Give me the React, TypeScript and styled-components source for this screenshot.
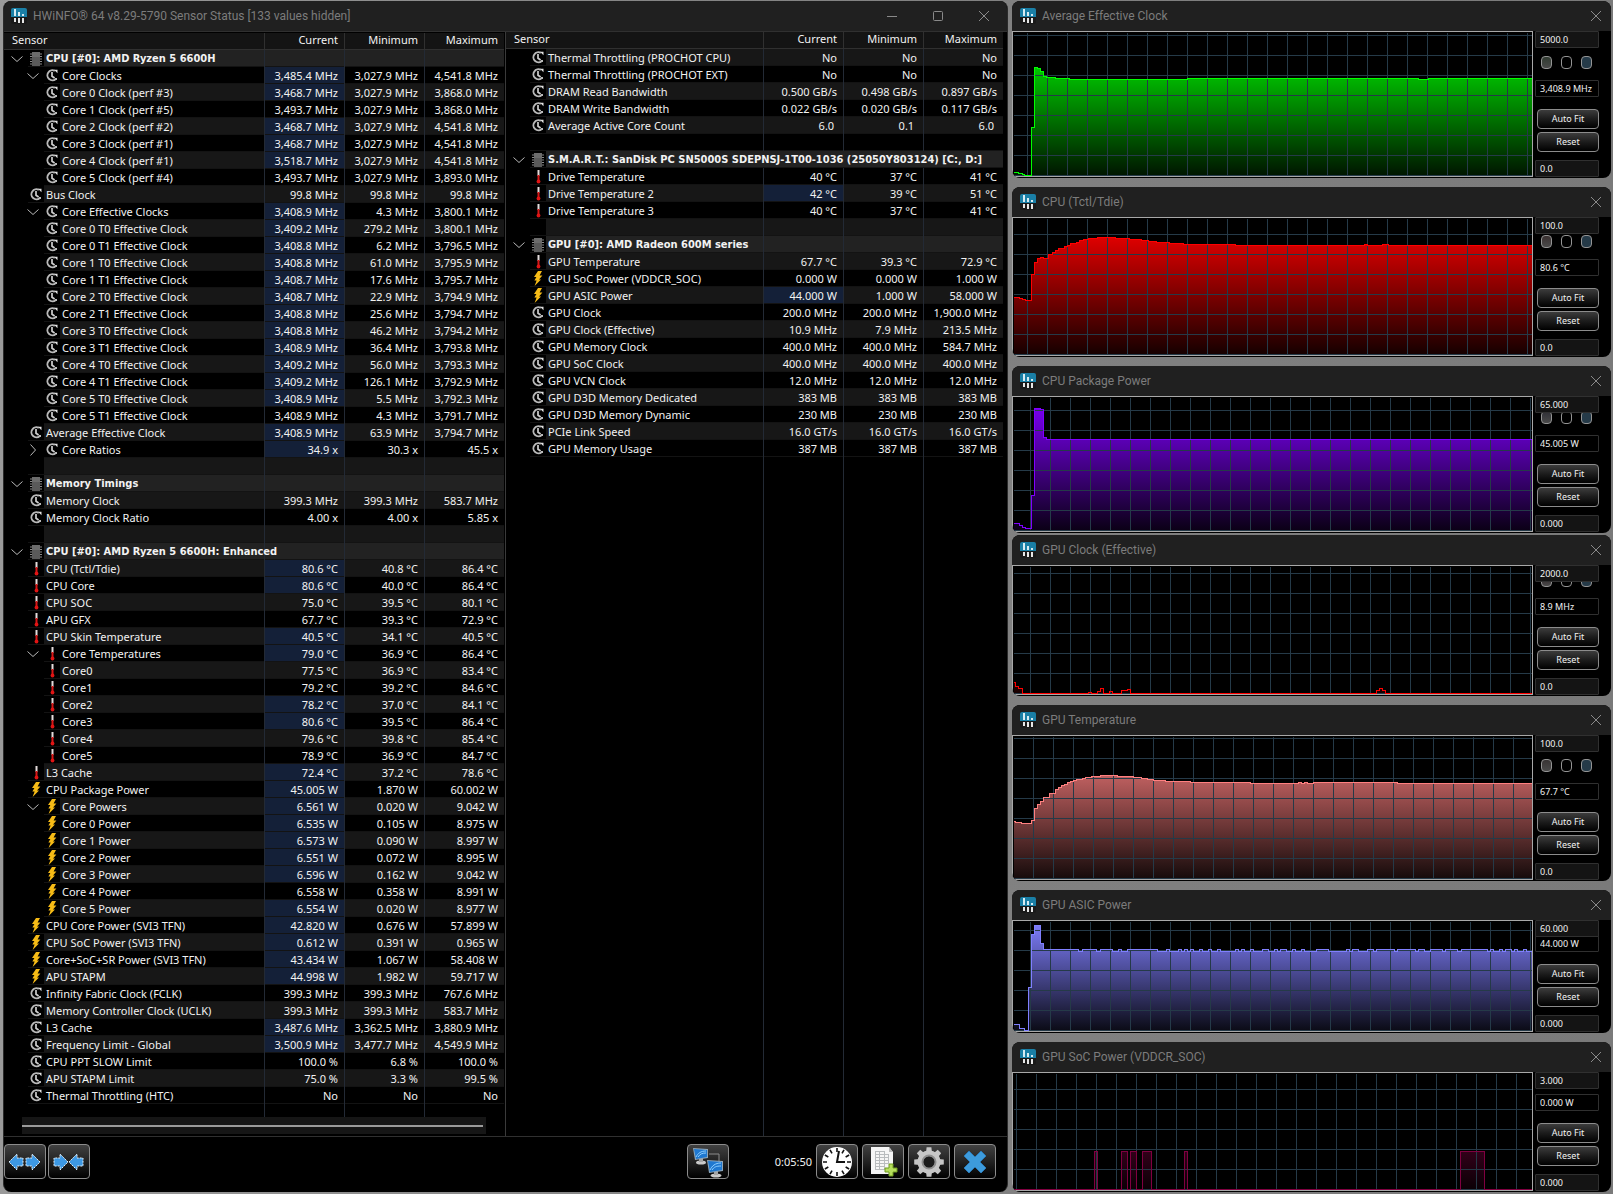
import React from "react";
import styled, { createGlobalStyle } from "styled-components";

const GlobalStyle = createGlobalStyle`
  *, *::before, *::after { box-sizing: border-box; }
  body {
    margin: 0;
    background: #7e7e7e;
    color: #f2f2f2;
    font-family: "Noto Sans", "Open Sans", sans-serif;
    font-size: 11px;
    line-height: 17px;
  }
  button, input { font-family: inherit; color: inherit; }
`;

/* ---------- layout ---------- */

const Desktop = styled.main`
  display: grid;
  grid-template-columns: minmax(0, 1005fr) minmax(0, 599fr);
  gap: 4px;
  min-height: 100vh;
  padding: 1px 2px 2px 3px;
  background: linear-gradient(90deg, #9a9a9a 0, #858585 40%, #7a7a7a 100%);
`;

const Window = styled.section`
  display: flex;
  flex-direction: column;
  min-width: 0;
  overflow: hidden;
  background: #000;
  border-radius: 8px;
`;

const SensorWindow = styled(Window)`
  border: solid #2b2b2b;
  border-width: 0 1px;
`;

const TitleBar = styled.header<{ $inset: number }>`
  display: flex;
  align-items: center;
  gap: 6px;
  flex: none;
  height: 30px;
  padding-left: ${(p) => p.$inset}px;
  background: #202020;
`;

const Title = styled.h1`
  flex: 1;
  min-width: 0;
  margin: 0;
  overflow: hidden;
  color: #7c7c7c;
  font-family: Roboto, "Noto Sans", sans-serif;
  font-size: 12px;
  font-weight: 400;
  line-height: 16px;
  white-space: nowrap;
`;

const CaptionButtons = styled.div`
  display: flex;
`;

const CaptionButton = styled.button<{ $width: number }>`
  display: grid;
  place-items: center;
  width: ${(p) => p.$width}px;
  height: 30px;
  padding: 0;
  border: 0;
  background: none;
  color: #8a8a8a;
`;

const Graphs = styled.div`
  display: flex;
  flex-direction: column;
  min-width: 0;
`;

/* ---------- sensor tables ---------- */

const Panes = styled.div`
  display: grid;
  grid-template-columns: minmax(0, 502fr) minmax(0, 501fr);
  flex: 1;
  border: solid #303030;
  border-width: 1px 0;
`;

const Pane = styled.div`
  display: flex;
  flex-direction: column;
  padding-right: 4px;
`;

const FramedPane = styled(Pane)`
  padding: 1px 1px 2px 0;
  border-right: 1px solid #3a3a3a;
`;

const Table = styled.table`
  flex: 1;
  width: 100%;
  table-layout: fixed;
  border-collapse: separate;
  border-spacing: 0;
  white-space: pre;
`;

const HeadCell = styled.th<{ $name?: boolean }>`
  width: ${(p) => (p.$name ? "auto" : "80px")};
  height: 17px;
  padding: ${(p) => (p.$name ? "0 0 0 8px" : "0 6px 0 0")};
  background: #141414;
  border-bottom: 1px solid #303030;
  border-left: ${(p) => (p.$name ? "0" : "1px solid #303030")};
  font-weight: 400;
  line-height: 14px;
  text-align: ${(p) => (p.$name ? "left" : "right")};
  vertical-align: top;
`;

type Tone = "section" | "even" | "odd";
const toneColor: Record<Tone, string> = { section: "#222222", even: "#171717", odd: "#000000" };

const NameCell = styled.td`
  height: 17px;
  padding: 0;
`;

const NameLine = styled.div`
  display: flex;
  height: 17px;
`;

const Tree = styled.span<{ $level: number }>`
  display: flex;
  flex: none;
  align-items: center;
  justify-content: flex-end;
  width: ${(p) => 8 + p.$level * 16}px;
  padding-right: 5px;
`;

const IconBox = styled.span`
  display: grid;
  place-items: center;
  flex: none;
  width: 16px;
  box-shadow: inset 0 -1px #131313;
`;

const Name = styled.span<{ $tone: Tone }>`
  flex: 1;
  min-width: 0;
  padding-left: 2px;
  background: ${(p) => toneColor[p.$tone]};
  box-shadow: inset 0 -1px #131313;
  font-family: ${(p) => (p.$tone === "section" ? '"DejaVu Sans Condensed", "Noto Sans", sans-serif' : "inherit")};
  font-weight: ${(p) => (p.$tone === "section" ? 700 : 400)};
`;

const ValueCell = styled.td<{ $tone: Tone; $hot?: boolean }>`
  height: 17px;
  padding: 0 6px 0 0;
  background: ${(p) => (p.$hot ? "#142038" : toneColor[p.$tone])};
  border-left: 1px solid #232a35;
  box-shadow: inset 0 -1px #131313;
  text-align: right;
`;

const FillerCell = styled.td<{ $ruled?: boolean }>`
  padding: 0;
  border-left: ${(p) => (p.$ruled ? "1px solid #232a35" : "0")};
`;

const ScrollTrack = styled.div`
  display: flex;
  align-items: center;
  flex: none;
  height: 17px;
  margin: 0 18px;
  padding-right: 3px;
  background: #161616;
`;

const ScrollThumb = styled.div`
  flex: 1;
  height: 2px;
  background: #9a9a9a;
`;

/* ---------- toolbar ---------- */

const Toolbar = styled.footer`
  display: flex;
  align-items: flex-start;
  gap: 4px;
  flex: none;
  height: 55px;
  padding: 7px 11px 0 0;
`;

const ToolGroup = styled.div`
  display: flex;
  flex: 1;
  gap: 2px;
`;

const ToolButton = styled.button`
  display: grid;
  place-items: center;
  width: 42px;
  height: 35px;
  padding: 0;
  border: 1px solid #8c8c8c;
  border-radius: 4px;
  background: linear-gradient(#414141 0, #222 50%, #000 100%);
`;

const Elapsed = styled.time`
  width: 79px;
  line-height: 36px;
  text-align: right;
`;

/* ---------- graph windows ---------- */

const GraphWindow = styled(Window)<{ $gap: number }>`
  flex: none;
  margin-bottom: ${(p) => p.$gap}px;
  padding-bottom: 1px;
`;

const GraphBody = styled.div<{ $height: number }>`
  display: grid;
  grid-template-columns: minmax(0, 1fr) 78px;
  grid-template-rows: minmax(0, 1fr);
  height: ${(p) => p.$height}px;
`;

const Plot = styled.div`
  min-height: 0;
  overflow: hidden;
  border: 1px solid #a8a8a8;
  svg { display: block; width: 100%; height: 100%; }
`;

const Side = styled.div`
  display: grid;
  grid-template-rows: minmax(0, 1fr);
  padding: 0 12px 0 2px;
  overflow: hidden;
`;

const Field = styled.input`
  width: 100%;
  height: 17px;
  padding: 0 0 0 4px;
  border: 1px solid #303030;
  border-radius: 1px;
  background: #141414;
  color: #f2f2f2;
  font-size: 9px;
  line-height: 15px;
`;

const TopField = styled(Field)`
  grid-area: 1 / 1;
  align-self: start;
  z-index: 1;
`;

const Reading = styled(Field)`
  margin-bottom: 12px;
  background: #000;
`;

const Controls = styled.div`
  grid-area: 1 / 1;
  align-self: end;
  display: flex;
  flex-direction: column;
`;

const Swatches = styled.div`
  display: flex;
  gap: 9px;
  padding-left: 6px;
  margin-bottom: 11px;
`;

const Swatch = styled.button<{ $fill: string }>`
  flex: none;
  width: 11px;
  height: 13px;
  padding: 0;
  border: 1px solid #949494;
  border-radius: 4px;
  background: ${(p) => p.$fill};
`;

const SmallButton = styled.button<{ $after: number }>`
  height: 20px;
  margin: 0 0 ${(p) => p.$after}px 2px;
  padding: 0;
  border: 1px solid #8c8c8c;
  border-radius: 4px;
  background: linear-gradient(#3c3c3c 0, #1c1c1c 50%, #000 100%);
  color: #f2f2f2;
  font-size: 9px;
  line-height: 18px;
`;

/* ---------- icons ---------- */

const AppIcon = () => (
  <svg width="16" height="16" viewBox="0 0 16 16" aria-hidden="true">
    <path d="M2 0h12a2 2 0 0 1 2 2v7H0V2a2 2 0 0 1 2-2z" fill="#1a7fa6" />
    <path d="M0 9h16v5a2 2 0 0 1-2 2H2a2 2 0 0 1-2-2z" fill="#191919" />
    <path d="M3 1h2v7H3zM7 4h2v4H7zM11 6h2v2h-2z" fill="#d6ebf2" />
    <path d="M3 10h2v4H3zM7 10h2v5H7zM11 10h2v5h-2z" fill="#e6e6e6" />
  </svg>
);

const CloseIcon = () => (
  <svg width="12" height="12" viewBox="0 0 12 12" aria-hidden="true">
    <path d="M1 1l10 10M11 1L1 11" stroke="currentColor" fill="none" />
  </svg>
);

const Chevron = ({ open }: { open: boolean }) => (
  <svg width="12" height="12" viewBox="0 0 12 12" aria-hidden="true">
    <path d={open ? "M0.5 3.5L6 8.5L11.5 3.5" : "M3.5 0.5L8.5 6L3.5 11.5"} stroke="#b8b8b8" fill="none" />
  </svg>
);

const icons = {
  clock: (
    <svg width="12" height="13" viewBox="0 0 12 13" aria-hidden="true">
      <path d="M8.8 1.900A5 5 0 1 0 9.800 10" fill="none" stroke="#b9b9b9" strokeWidth="1.900" />
      <path d="M8 0.800H11.500V4.200z" fill="#e2e2e2" />
      <path d="M9 9h2v2H9z" fill="#b9b9b9" />
      <path d="M6 3v4.200L8.600 9" fill="none" stroke="#cfcfcf" strokeWidth="1.700" />
    </svg>
  ),
  temp: (
    <svg width="5" height="14" viewBox="0 0 5 14" aria-hidden="true">
      <path d="M1.500 0h2v6h-2z" fill="#e4dcdc" />
      <path d="M1.500 5h2v5h-2z" fill="#d81818" />
      <circle cx="2.500" cy="11.500" r="1.900" fill="#e01414" />
    </svg>
  ),
  power: (
    <svg width="10" height="15" viewBox="0 0 10 15" aria-hidden="true">
      <path d="M5 0h4L6.600 4.600H9.400L6 8.600h2L1.600 15L3.600 9.400H1.400L3.400 6H1z" fill="#f6bb16" />
    </svg>
  ),
  chip: (
    <svg width="12" height="14" viewBox="0 0 12 14" aria-hidden="true">
      <path d="M0 2h12M0 4.500h12M0 7h12M0 9.500h12M0 12h12" stroke="#8a8a8a" />
      <path d="M2 0h8v14H2z" fill="#5a5a5a" />
      <path d="M2 0h8v5H2z" fill="#6c6c6c" />
    </svg>
  ),
};
type IconName = keyof typeof icons;

const leftArrow = "M1 9L9 1V5H15V13H9V17z";
const rightArrow = "M15 9L7 1V5H1V13H7V17z";

const ArrowsIcon = ({ out }: { out: boolean }) => (
  <svg width="34" height="18" viewBox="0 0 34 18" aria-hidden="true">
    <g fill="#3d98e3" stroke="#e6f2fb" strokeWidth="1" strokeDasharray="2 1">
      <path d={out ? leftArrow : rightArrow} transform={out ? undefined : "translate(1 0)"} />
      <path d={out ? rightArrow : leftArrow} transform={out ? "translate(17 0)" : "translate(16 0)"} />
    </g>
  </svg>
);

const NetworkIcon = () => (
  <svg width="32" height="32" viewBox="0 0 32 32" aria-hidden="true">
    <path d="M17 8h10v8" fill="none" stroke="#8c8c8c" />
    <ellipse cx="9" cy="16.500" rx="5" ry="2" fill="#c9c9c9" />
    <path d="M7 12h4v4H7z" fill="#a5a5a5" />
    <path d="M1 2l15 1v9l-13 2z" fill="#8fa6b8" />
    <path d="M2 3l13 1v7l-11 2z" fill="#1f78d0" />
    <path d="M4 11c2-4 5-6 10-6M6 11c2-3 4-4 8-4" fill="none" stroke="#8fd0ff" />
    <ellipse cx="24" cy="29.500" rx="5.500" ry="2" fill="#c9c9c9" />
    <path d="M22 25h4v4h-4z" fill="#a5a5a5" />
    <path d="M15 14l16 1v10l-14 2z" fill="#8fa6b8" />
    <path d="M16 15l14 1v8l-12 2z" fill="#1f78d0" />
    <path d="M18 24c2-4 5-7 11-7M20 24c2-3 4-4 9-4" fill="none" stroke="#8fd0ff" />
  </svg>
);

const WallClockIcon = () => (
  <svg width="32" height="32" viewBox="0 0 32 32" aria-hidden="true">
    <circle cx="16" cy="16" r="15" fill="#fff" />
    {Array.from({ length: 12 }, (_, i) => (
      <path key={i} d="M16 2v4" stroke="#111" strokeWidth="1.600" transform={`rotate(${i * 30} 16 16)`} />
    ))}
    <path d="M18 5L16 16H24" fill="none" stroke="#111" strokeWidth="2" />
  </svg>
);

const ReportIcon = () => (
  <svg width="32" height="32" viewBox="0 0 32 32" aria-hidden="true">
    <path d="M4 1h18l4 5v22H4z" fill="#f6f6f6" />
    <path d="M22 1v5h4z" fill="#bcbcbc" />
    <path d="M8 5.500h10M8 8.500h14M8 11.500h14M8 14.500h14M8 17.500h14M8 20.500h10M8 23.500h10M8.500 5v19M12.500 5v19M17.500 5v19M21.500 8v10" stroke="#b9bcbe" fill="none" />
    <path d="M22 18h4v4h4v4h-4v4h-4v-4h-4v-4h4z" fill="#b5dd5c" stroke="#6f9c1e" />
  </svg>
);

const GearIcon = () => (
  <svg width="32" height="32" viewBox="0 0 32 32" aria-hidden="true">
    <g fill="#c6c6c6">
      {Array.from({ length: 8 }, (_, i) => (
        <path key={i} d="M13 7L13.600 1.200H18.400L19 7z" transform={`rotate(${i * 45} 16 16)`} />
      ))}
    </g>
    <circle cx="16" cy="16" r="8.500" fill="none" stroke="#c6c6c6" strokeWidth="6" />
    <circle cx="16" cy="16" r="6.500" fill="none" stroke="#8e8e8e" strokeWidth="2" />
    <circle cx="16" cy="16" r="5.500" fill="#1c1c1c" />
  </svg>
);

const ExitIcon = () => (
  <svg width="26" height="26" viewBox="0 0 26 26" aria-hidden="true">
    <path d="M7 2L13 8L19 2L24 7L18 13L24 19L19 24L13 18L7 24L2 19L8 13L2 7z" fill="#3d9bdc" stroke="#2a78b4" />
  </svg>
);

/* ---------- data ---------- */

interface Row {
  kind: "section" | "item" | "blank";
  icon?: IconName;
  level: number;
  name: string;
  values: string[];
  hot: boolean;
  open?: boolean;
  wide?: boolean;
}

const section = (name: string, wide = false): Row => ({
  kind: "section", icon: "chip", level: 1, name, values: [], hot: false, open: true, wide,
});
const blank: Row = { kind: "blank", level: 1, name: "", values: [], hot: false };
const item = (icon: IconName, level: number, name: string, values: string, hot = false, open?: boolean): Row => ({
  kind: "item", icon, level, name, values: values.split("|"), hot, open,
});

const leftRows: Row[] = [
  section("CPU [#0]: AMD Ryzen 5 6600H"),
  item("clock", 2, "Core Clocks", "3,485.4 MHz|3,027.9 MHz|4,541.8 MHz", true, true),
  item("clock", 2, "Core 0 Clock (perf #3)", "3,468.7 MHz|3,027.9 MHz|3,868.0 MHz", true),
  item("clock", 2, "Core 1 Clock (perf #5)", "3,493.7 MHz|3,027.9 MHz|3,868.0 MHz"),
  item("clock", 2, "Core 2 Clock (perf #2)", "3,468.7 MHz|3,027.9 MHz|4,541.8 MHz", true),
  item("clock", 2, "Core 3 Clock (perf #1)", "3,468.7 MHz|3,027.9 MHz|4,541.8 MHz", true),
  item("clock", 2, "Core 4 Clock (perf #1)", "3,518.7 MHz|3,027.9 MHz|4,541.8 MHz", true),
  item("clock", 2, "Core 5 Clock (perf #4)", "3,493.7 MHz|3,027.9 MHz|3,893.0 MHz"),
  item("clock", 1, "Bus Clock", "99.8 MHz|99.8 MHz|99.8 MHz"),
  item("clock", 2, "Core Effective Clocks", "3,408.9 MHz|4.3 MHz|3,800.1 MHz", true, true),
  item("clock", 2, "Core 0 T0 Effective Clock", "3,409.2 MHz|279.2 MHz|3,800.1 MHz", true),
  item("clock", 2, "Core 0 T1 Effective Clock", "3,408.8 MHz|6.2 MHz|3,796.5 MHz", true),
  item("clock", 2, "Core 1 T0 Effective Clock", "3,408.8 MHz|61.0 MHz|3,795.9 MHz", true),
  item("clock", 2, "Core 1 T1 Effective Clock", "3,408.7 MHz|17.6 MHz|3,795.7 MHz", true),
  item("clock", 2, "Core 2 T0 Effective Clock", "3,408.7 MHz|22.9 MHz|3,794.9 MHz", true),
  item("clock", 2, "Core 2 T1 Effective Clock", "3,408.8 MHz|25.6 MHz|3,794.7 MHz", true),
  item("clock", 2, "Core 3 T0 Effective Clock", "3,408.8 MHz|46.2 MHz|3,794.2 MHz", true),
  item("clock", 2, "Core 3 T1 Effective Clock", "3,408.9 MHz|36.4 MHz|3,793.8 MHz", true),
  item("clock", 2, "Core 4 T0 Effective Clock", "3,409.2 MHz|56.0 MHz|3,793.3 MHz", true),
  item("clock", 2, "Core 4 T1 Effective Clock", "3,409.2 MHz|126.1 MHz|3,792.9 MHz", true),
  item("clock", 2, "Core 5 T0 Effective Clock", "3,408.9 MHz|5.5 MHz|3,792.3 MHz", true),
  item("clock", 2, "Core 5 T1 Effective Clock", "3,408.9 MHz|4.3 MHz|3,791.7 MHz"),
  item("clock", 1, "Average Effective Clock", "3,408.9 MHz|63.9 MHz|3,794.7 MHz", true),
  item("clock", 2, "Core Ratios", "34.9 x|30.3 x|45.5 x", true, false),
  blank,
  section("Memory Timings"),
  item("clock", 1, "Memory Clock", "399.3 MHz|399.3 MHz|583.7 MHz"),
  item("clock", 1, "Memory Clock Ratio", "4.00 x|4.00 x|5.85 x"),
  blank,
  section("CPU [#0]: AMD Ryzen 5 6600H: Enhanced"),
  item("temp", 1, "CPU (Tctl/Tdie)", "80.6 °C|40.8 °C|86.4 °C", true),
  item("temp", 1, "CPU Core", "80.6 °C|40.0 °C|86.4 °C", true),
  item("temp", 1, "CPU SOC", "75.0 °C|39.5 °C|80.1 °C"),
  item("temp", 1, "APU GFX", "67.7 °C|39.3 °C|72.9 °C"),
  item("temp", 1, "CPU Skin Temperature", "40.5 °C|34.1 °C|40.5 °C", true),
  item("temp", 2, "Core Temperatures", "79.0 °C|36.9 °C|86.4 °C", true, true),
  item("temp", 2, "Core0", "77.5 °C|36.9 °C|83.4 °C"),
  item("temp", 2, "Core1", "79.2 °C|39.2 °C|84.6 °C"),
  item("temp", 2, "Core2", "78.2 °C|37.0 °C|84.1 °C", true),
  item("temp", 2, "Core3", "80.6 °C|39.5 °C|86.4 °C", true),
  item("temp", 2, "Core4", "79.6 °C|39.8 °C|85.4 °C"),
  item("temp", 2, "Core5", "78.9 °C|36.9 °C|84.7 °C"),
  item("temp", 1, "L3 Cache", "72.4 °C|37.2 °C|78.6 °C", true),
  item("power", 1, "CPU Package Power", "45.005 W|1.870 W|60.002 W", true),
  item("power", 2, "Core Powers", "6.561 W|0.020 W|9.042 W", true, true),
  item("power", 2, "Core 0 Power", "6.535 W|0.105 W|8.975 W", true),
  item("power", 2, "Core 1 Power", "6.573 W|0.090 W|8.997 W", true),
  item("power", 2, "Core 2 Power", "6.551 W|0.072 W|8.995 W", true),
  item("power", 2, "Core 3 Power", "6.596 W|0.162 W|9.042 W", true),
  item("power", 2, "Core 4 Power", "6.558 W|0.358 W|8.991 W"),
  item("power", 2, "Core 5 Power", "6.554 W|0.020 W|8.977 W", true),
  item("power", 1, "CPU Core Power (SVI3 TFN)", "42.820 W|0.676 W|57.899 W", true),
  item("power", 1, "CPU SoC Power (SVI3 TFN)", "0.612 W|0.391 W|0.965 W", true),
  item("power", 1, "Core+SoC+SR Power (SVI3 TFN)", "43.434 W|1.067 W|58.408 W", true),
  item("power", 1, "APU STAPM", "44.998 W|1.982 W|59.717 W", true),
  item("clock", 1, "Infinity Fabric Clock (FCLK)", "399.3 MHz|399.3 MHz|767.6 MHz"),
  item("clock", 1, "Memory Controller Clock (UCLK)", "399.3 MHz|399.3 MHz|583.7 MHz"),
  item("clock", 1, "L3 Cache", "3,487.6 MHz|3,362.5 MHz|3,880.9 MHz", true),
  item("clock", 1, "Frequency Limit - Global", "3,500.9 MHz|3,477.7 MHz|4,549.9 MHz", true),
  item("clock", 1, "CPU PPT SLOW Limit", "100.0 %|6.8 %|100.0 %"),
  item("clock", 1, "APU STAPM Limit", "75.0 %|3.3 %|99.5 %"),
  item("clock", 1, "Thermal Throttling (HTC)", "No|No|No"),
];

const rightRows: Row[] = [
  item("clock", 1, "Thermal Throttling (PROCHOT CPU)", "No|No|No"),
  item("clock", 1, "Thermal Throttling (PROCHOT EXT)", "No|No|No"),
  item("clock", 1, "DRAM Read Bandwidth", "0.500 GB/s|0.498 GB/s|0.897 GB/s"),
  item("clock", 1, "DRAM Write Bandwidth", "0.022 GB/s|0.020 GB/s|0.117 GB/s"),
  item("clock", 1, "Average Active Core Count", "6.0 |0.1 |6.0 "),
  blank,
  section("S.M.A.R.T.: SanDisk PC SN5000S SDEPNSJ-1T00-1036 (25050Y803124) [C:, D:]", true),
  item("temp", 1, "Drive Temperature", "40 °C|37 °C|41 °C"),
  item("temp", 1, "Drive Temperature 2", "42 °C|39 °C|51 °C", true),
  item("temp", 1, "Drive Temperature 3", "40 °C|37 °C|41 °C"),
  blank,
  section("GPU [#0]: AMD Radeon 600M series"),
  item("temp", 1, "GPU Temperature", "67.7 °C|39.3 °C|72.9 °C"),
  item("power", 1, "GPU SoC Power (VDDCR_SOC)", "0.000 W|0.000 W|1.000 W"),
  item("power", 1, "GPU ASIC Power", "44.000 W|1.000 W|58.000 W", true),
  item("clock", 1, "GPU Clock", "200.0 MHz|200.0 MHz|1,900.0 MHz"),
  item("clock", 1, "GPU Clock (Effective)", "10.9 MHz|7.9 MHz|213.5 MHz"),
  item("clock", 1, "GPU Memory Clock", "400.0 MHz|400.0 MHz|584.7 MHz"),
  item("clock", 1, "GPU SoC Clock", "400.0 MHz|400.0 MHz|400.0 MHz"),
  item("clock", 1, "GPU VCN Clock", "12.0 MHz|12.0 MHz|12.0 MHz"),
  item("clock", 1, "GPU D3D Memory Dedicated", "383 MB|383 MB|383 MB"),
  item("clock", 1, "GPU D3D Memory Dynamic", "230 MB|230 MB|230 MB"),
  item("clock", 1, "PCIe Link Speed", "16.0 GT/s|16.0 GT/s|16.0 GT/s"),
  item("clock", 1, "GPU Memory Usage", "387 MB|387 MB|387 MB"),
];

/* Each step is [x, y]: from x on, the trace stays at y until the next step. */
type Step = [number, number];

const alternate = (edges: number[], high: number, low: number): Step[] =>
  edges.map((x, i) => [x, i % 2 === 0 ? high : low]);

const pulses = (spans: Step[], top: number, base: number): Step[] => [
  [0, base],
  ...spans.flatMap(([from, to]): Step[] => [[from, top], [to, base]]),
];

interface Graph {
  title: string;
  color: string;
  tint: string;
  height: number;
  gap: number;
  gridX: number;
  max: string;
  now: string;
  min: string;
  steps: Step[];
}

const asicEdges = [
  30, 65, 69, 83, 87, 99, 105, 108, 114, 144, 153, 156, 165, 168, 171, 174, 177, 180, 186, 189, 195, 198, 204, 207,
  222, 225, 228, 231, 237, 240, 249, 255, 261, 264, 267, 273, 279, 282, 288, 291, 303, 315, 333, 336, 339, 345, 354,
  360, 363, 381, 384, 402, 405, 411, 417, 429, 432, 444, 448, 474, 477, 480, 486, 489, 492, 498, 501, 504, 510, 513,
];

const graphs: Graph[] = [
  {
    title: "Average Effective Clock", color: "0,255,0", tint: "#303a30", height: 146, gap: 9, gridX: 14,
    max: "5000.0", now: "3,408.9 MHz", min: "0.0",
    steps: [[0, 140], [5, 141], [9, 142], [11, 143], [18, 95], [21, 35], [24, 36], [27, 39], [30, 44], [33, 45], [42, 46], [56, 47], [174, 46], [405, 47], [415, 46]],
  },
  {
    title: "CPU (Tctl/Tdie)", color: "255,0,0", tint: "#3a3030", height: 139, gap: 9, gridX: 14,
    max: "100.0", now: "80.6 °C", min: "0.0",
    steps: [[0, 79], [6, 80], [9, 81], [12, 82], [18, 56], [21, 44], [24, 40], [27, 39], [30, 40], [35, 36], [39, 34], [42, 32], [45, 30], [51, 28], [54, 27], [57, 25], [63, 24], [66, 22], [70, 21], [75, 20], [84, 19], [102, 20], [116, 21], [128, 22], [135, 23], [143, 24], [156, 25], [170, 26], [222, 27], [351, 26], [354, 27], [369, 26], [375, 27]],
  },
  {
    title: "CPU Package Power", color: "128,0,255", tint: "#303036", height: 136, gap: 2, gridX: 17,
    max: "65.000", now: "45.005 W", min: "0.000",
    steps: [[0, 126], [6, 128], [9, 130], [12, 131], [18, 98], [21, 11], [27, 12], [30, 40], [33, 42]],
  },
  {
    title: "GPU Clock (Effective)", color: "255,0,0", tint: "#2a1c20", height: 130, gap: 9, gridX: 17,
    max: "2000.0", now: "8.9 MHz", min: "0.0",
    steps: [[0, 116], [2, 120], [5, 122], [9, 127], [75, 126], [78, 127], [84, 125], [87, 122], [90, 127], [96, 125], [99, 127], [108, 124], [114, 123], [117, 127], [363, 124], [366, 122], [369, 124], [372, 127]],
  },
  {
    title: "GPU Temperature", color: "255,128,128", tint: "#383434", height: 145, gap: 9, gridX: 20,
    max: "100.0", now: "67.7 °C", min: "0.0",
    steps: [[0, 85], [2, 86], [8, 87], [18, 84], [21, 72], [24, 68], [27, 65], [30, 61], [36, 57], [42, 53], [45, 51], [48, 49], [51, 48], [54, 46], [57, 45], [60, 44], [63, 43], [69, 42], [72, 41], [78, 40], [87, 39], [104, 40], [120, 41], [128, 42], [134, 43], [140, 44], [152, 45], [177, 46], [237, 47], [285, 46], [288, 47], [291, 46], [294, 47], [300, 46], [384, 47]],
  },
  {
    title: "GPU ASIC Power", color: "128,128,255", tint: "#303036", height: 112, gap: 9, gridX: 17,
    max: "60.000", now: "44.000 W", min: "0.000",
    steps: [[0, 103], [6, 107], [11, 109], [15, 66], [18, 13], [21, 4], [27, 22], ...alternate(asicEdges, 28, 30)],
  },
  {
    title: "GPU SoC Power (VDDCR_SOC)", color: "128,0,64", tint: "#303030", height: 119, gap: 0, gridX: 3,
    max: "3.000", now: "0.000 W", min: "0.000",
    steps: pulses([[81, 84], [108, 114], [117, 123], [129, 138], [171, 174], [447, 471]], 78, 116),
  },
];

/* ---------- parts ---------- */

const SensorTable = ({ rows, label }: { rows: Row[]; label: string }) => (
  <Table aria-label={label}>
    <thead>
      <tr>
        <HeadCell $name>Sensor</HeadCell>
        <HeadCell>Current</HeadCell>
        <HeadCell>Minimum</HeadCell>
        <HeadCell>Maximum</HeadCell>
      </tr>
    </thead>
    <tbody>
      {rows.map((row, i) => {
        const tone: Tone = row.kind === "section" ? "section" : i % 2 === 0 ? "even" : "odd";
        return (
          <tr key={i}>
            <NameCell colSpan={row.wide ? 4 : 1}>
              <NameLine>
                <Tree $level={row.level}>{row.open !== undefined && <Chevron open={row.open} />}</Tree>
                <IconBox>{row.icon && icons[row.icon]}</IconBox>
                <Name $tone={tone}>{row.name}</Name>
              </NameLine>
            </NameCell>
            {!row.wide &&
              [0, 1, 2].map((c) => (
                <ValueCell key={c} $tone={tone} $hot={c === 0 && row.hot}>
                  {row.values[c]}
                </ValueCell>
              ))}
          </tr>
        );
      })}
      <tr>
        <FillerCell />
        <FillerCell $ruled />
        <FillerCell $ruled />
        <FillerCell $ruled />
      </tr>
    </tbody>
  </Table>
);

const PLOT_WIDTH = 519;

const GraphPlot = ({ graph, id }: { graph: Graph; id: string }) => {
  const h = graph.height - 2;
  const trace = graph.steps.map(([x, y], i) => (i === 0 ? `M${x} ${y}` : `H${x}V${y}`)).join("") + `H${PLOT_WIDTH}`;
  const [r, g, b] = graph.color.split(",").map((v) => Math.round(Number(v) * 0.08));
  let grid = "";
  for (let x = graph.gridX; x < PLOT_WIDTH; x += 20) grid += `M${x} 0V${h}`;
  for (let y = h - 1; y > 0; y -= 20) grid += `M0 ${y}H${PLOT_WIDTH}`;
  return (
    <svg viewBox={`0 0 ${PLOT_WIDTH} ${h}`} preserveAspectRatio="none" role="img" aria-label={`${graph.title} history`}>
      <defs>
        <linearGradient id={id} gradientUnits="userSpaceOnUse" x1="0" y1="0" x2="0" y2={h}>
          <stop offset="0" stopColor={`rgb(${graph.color})`} />
          <stop offset="1" stopColor={`rgb(${r},${g},${b})`} />
        </linearGradient>
      </defs>
      <g transform="translate(0.5 0.5)" shapeRendering="crispEdges" fill="none">
        <path d={`${trace}V${h}H0Z`} fill={`url(#${id})`} />
        <path d={grid} stroke="#253a48" />
        <path d={trace} stroke={`rgb(${graph.color})`} />
      </g>
    </svg>
  );
};

const GraphPanel = ({ graph, id }: { graph: Graph; id: string }) => (
  <GraphWindow $gap={graph.gap}>
    <TitleBar $inset={8}>
      <AppIcon />
      <Title as="h2">{graph.title}</Title>
      <CaptionButton $width={30} aria-label={`Close ${graph.title}`}>
        <CloseIcon />
      </CaptionButton>
    </TitleBar>
    <GraphBody $height={graph.height}>
      <Plot>
        <GraphPlot graph={graph} id={id} />
      </Plot>
      <Side>
        <TopField aria-label="Scale maximum" defaultValue={graph.max} />
        <Controls>
          <Swatches>
            <Swatch aria-label="Graph colour" $fill={`linear-gradient(${graph.tint}, #4a4a4a)`} />
            <Swatch aria-label="Background colour" $fill="#000" />
            <Swatch aria-label="Grid colour" $fill="#253a48" />
          </Swatches>
          <Reading aria-label="Current value" readOnly value={graph.now} />
          <SmallButton $after={3}>Auto Fit</SmallButton>
          <SmallButton $after={8}>Reset</SmallButton>
          <Field aria-label="Scale minimum" defaultValue={graph.min} />
        </Controls>
      </Side>
    </GraphBody>
  </GraphWindow>
);

export default function App() {
  return (
    <>
      <GlobalStyle />
      <Desktop>
        <SensorWindow>
          <TitleBar $inset={7}>
            <AppIcon />
            <Title>HWiNFO® 64 v8.29-5790 Sensor Status [133 values hidden]</Title>
            <CaptionButtons>
              <CaptionButton $width={46} aria-label="Minimize">
                <svg width="12" height="12" viewBox="0 0 12 12" aria-hidden="true">
                  <path d="M1 6.500h10" stroke="currentColor" />
                </svg>
              </CaptionButton>
              <CaptionButton $width={46} aria-label="Maximize">
                <svg width="12" height="12" viewBox="0 0 12 12" aria-hidden="true">
                  <rect x="1.500" y="1.500" width="9" height="9" rx="1" stroke="currentColor" fill="none" />
                </svg>
              </CaptionButton>
              <CaptionButton $width={46} aria-label="Close">
                <CloseIcon />
              </CaptionButton>
            </CaptionButtons>
          </TitleBar>
          <Panes>
            <FramedPane>
              <SensorTable rows={leftRows} label="Sensors" />
              <ScrollTrack>
                <ScrollThumb />
              </ScrollTrack>
            </FramedPane>
            <Pane>
              <SensorTable rows={rightRows} label="Sensors, continued" />
            </Pane>
          </Panes>
          <Toolbar>
            <ToolGroup>
              <ToolButton aria-label="Expand columns"><ArrowsIcon out /></ToolButton>
              <ToolButton aria-label="Collapse columns"><ArrowsIcon out={false} /></ToolButton>
            </ToolGroup>
            <ToolButton aria-label="Remote sensors"><NetworkIcon /></ToolButton>
            <Elapsed>0:05:50</Elapsed>
            <ToolButton aria-label="Reset timer"><WallClockIcon /></ToolButton>
            <ToolButton aria-label="Start logging"><ReportIcon /></ToolButton>
            <ToolButton aria-label="Settings"><GearIcon /></ToolButton>
            <ToolButton aria-label="Exit"><ExitIcon /></ToolButton>
          </Toolbar>
        </SensorWindow>
        <Graphs>
          {graphs.map((graph, i) => (
            <GraphPanel key={graph.title} graph={graph} id={`fill${i}`} />
          ))}
        </Graphs>
      </Desktop>
    </>
  );
}
